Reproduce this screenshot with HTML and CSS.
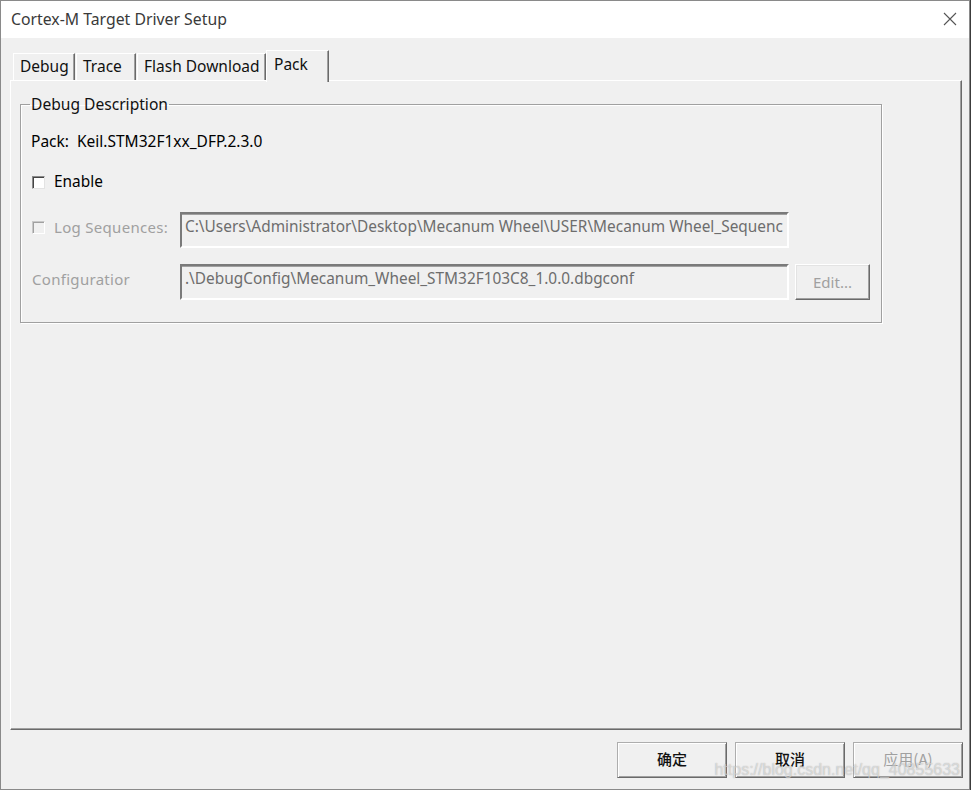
FILE: index.html
```html
<!DOCTYPE html>
<html>
<head>
<meta charset="utf-8">
<link rel="stylesheet" href="styles.css">
</head>
<body>
<div class="window">
  <div class="titlebar">
    <span class="title">Cortex-M Target Driver Setup</span>
    <svg class="close" width="14" height="14" viewBox="0 0 14 14"><path d="M1 1L13 13M13 1L1 13" stroke="#555" stroke-width="1.1" fill="none"/></svg>
  </div>
  <div class="client">
    <div class="tabs">
      <div class="tab tab-debug">Debug</div>
      <div class="tab tab-trace">Trace</div>
      <div class="tab tab-flash">Flash Download</div>
      <div class="tab tab-pack active">Pack</div>
    </div>
    <div class="panel">
      <fieldset class="desc">
        <legend>Debug Description</legend>
        <div class="pack-row">Pack:&nbsp; Keil.STM32F1xx_DFP.2.3.0</div>
        <div class="check-row">
          <span class="checkbox"></span>
          <span class="check-label">Enable</span>
        </div>
        <div class="field-row">
          <div class="field-label">
            <span class="checkbox disabled"></span>
            <span class="check-label dim">Log Sequences:</span>
          </div>
          <div class="input">C:\Users\Administrator\Desktop\Mecanum Wheel\USER\Mecanum Wheel_Sequenc</div>
        </div>
        <div class="field-row">
          <div class="field-label"><span class="dim">Configuratior</span></div>
          <div class="input">.\DebugConfig\Mecanum_Wheel_STM32F103C8_1.0.0.dbgconf</div>
          <div class="btn edit">Edit...</div>
        </div>
      </fieldset>
    </div>
    <div class="buttons">
      <div class="btn dlg">确定</div>
      <div class="btn dlg">取消</div>
      <div class="btn dlg dim-btn">应用(A)</div>
      <div class="watermark">https://blog.csdn.net/qq_40855633</div>
    </div>
  </div>
</div>
</body>
</html>
```
FILE: styles.css
```css
html, body {
  margin: 0;
  padding: 0;
  background: #3c3c3c;
}
body {
  font-family: "Noto Sans", "Noto Sans CJK SC", sans-serif;
  font-size: 15.4px;
  color: #000;
}
.window {
  width: 970px;
  height: 790px;
  box-sizing: border-box;
  border: 1px solid #8a8a8a;
  background: #f0f0f0;
  display: flex;
  flex-direction: column;
}
.titlebar {
  height: 37px;
  flex: none;
  background: #fff;
  display: flex;
  align-items: center;
  justify-content: space-between;
  padding: 0 12px 0 10px;
}
.title {
  font-size: 15.8px;
  color: #3a3a3a;
  margin-top: -1px;
}
.close {
  margin-top: -1px;
}
.client {
  padding: 12px 6px 0 9px;
  position: relative;
}
.tabs {
  display: flex;
  align-items: flex-end;
  height: 32px;
  margin-bottom: -2px;
  padding-left: 3px;
  position: relative;
  z-index: 2;
}
.tab {
  box-sizing: border-box;
  height: 27px;
  margin-bottom: 2px;
  border-top: 1px solid #fff;
  border-left: 1px solid #fff;
  border-right: 1px solid #6a6a6a;
  box-shadow: inset -1px 0 0 #a0a0a0;
  background: #f0f0f0;
  font-size: 15.5px;
  line-height: 25px;
  padding-left: 6px;
  color: #111;
  white-space: nowrap;
}
.tab-debug { width: 62px; }
.tab-trace { width: 60px; margin-left: 1px; }
.tab-flash { width: 129px; margin-left: 1px; }
.tab-pack { width: 63px; }
.tab.active {
  height: 32px;
  margin-bottom: 0;
  line-height: 26px;
  padding-left: 7px;
}
.panel {
  box-sizing: border-box;
  width: 952px;
  height: 650px;
  border-top: 1px solid #fff;
  border-left: 1px solid #fff;
  border-right: 1px solid #6a6a6a;
  border-bottom: 1px solid #6a6a6a;
  box-shadow: inset -1px -1px 0 #a0a0a0;
  padding: 13px 0 0 9px;
}
.desc {
  box-sizing: border-box;
  width: 862px;
  height: 229px;
  margin: 0;
  padding: 17px 0 0 11px;
  border: 1px solid #a0a0a0;
  box-shadow: inset 1px 1px 0 #fff, 1px 1px 0 #fff;
}
.desc legend {
  padding: 0 1px;
  margin-left: -2px;
  font-size: 15.6px;
  line-height: 20px;
  color: #111;
}
.pack-row {
  height: 20px;
  line-height: 20px;
  margin-bottom: 21px;
  margin-left: -1px;
  font-size: 15.5px;
  white-space: nowrap;
}
.check-row {
  height: 20px;
  display: flex;
  align-items: center;
  margin-bottom: 20px;
}
.checkbox {
  box-sizing: border-box;
  width: 13px;
  height: 13px;
  flex: none;
  background: #fff;
  border: 1px solid;
  border-color: #8a8a8a #e3e3e3 #e3e3e3 #8a8a8a;
  box-shadow: inset 1px 1px 0 #444;
  margin-right: 9px;
}
.checkbox.disabled {
  background: #f0f0f0;
  box-shadow: inset 1px 1px 0 #a0a0a0;
  border-color: #c8c8c8 #fff #fff #c8c8c8;
}
.check-label {
  font-size: 15.4px;
  line-height: 20px;
}
.dim {
  color: #a0a0a0;
  font-size: 15px;
  letter-spacing: 0.3px;
  white-space: nowrap;
}
.field-row {
  display: flex;
  align-items: flex-start;
  height: 36px;
  margin-bottom: 16px;
}
.field-label {
  width: 148px;
  flex: none;
  display: flex;
  align-items: center;
  height: 30px;
}
.input {
  box-sizing: border-box;
  width: 609px;
  height: 36px;
  flex: none;
  border: 2px solid;
  border-color: #7a7a7a #fff #fff #7a7a7a;
  box-shadow: inset 0 1px 0 #a0a0a0;
  padding: 3px 0 0 3px;
  line-height: 20px;
  color: #6d6d6d;
  font-size: 15.4px;
  white-space: nowrap;
  overflow: hidden;
}
.btn {
  box-sizing: border-box;
  background: #f0f0f0;
  border-top: 1px solid #fff;
  border-left: 1px solid #fff;
  border-right: 1px solid #6a6a6a;
  border-bottom: 1px solid #6a6a6a;
  box-shadow: inset -1px -1px 0 #a0a0a0, inset 1px 1px 0 #e3e3e3;
  display: flex;
  align-items: center;
  justify-content: center;
}
.edit {
  width: 75px;
  height: 36px;
  margin-left: 6px;
  color: #a0a0a0;
  font-size: 15px;
}
.buttons {
  display: flex;
  justify-content: flex-end;
  gap: 8px;
  margin-top: 12px;
  position: relative;
}
.dlg {
  width: 110px;
  height: 36px;
  padding-bottom: 4px;
  font-family: "Noto Sans CJK SC", sans-serif;
  font-size: 15px;
  font-weight: 500;
  color: #111;
  border: 1px solid #adadad;
  border-right-color: #6a6a6a;
  border-bottom-color: #6a6a6a;
  box-shadow: inset 1px 1px 0 #fff, inset -1px -1px 0 #a0a0a0;
}
.dim-btn {
  color: #a0a0a0;
  font-weight: 400;
}
.watermark {
  position: absolute;
  right: 3px;
  top: 19px;
  font-family: "Liberation Sans", sans-serif;
  font-size: 16px;
  color: rgba(255, 255, 255, 0.5);
  text-shadow: 0 0 1px rgba(90, 90, 90, 0.5);
  pointer-events: none;
}
```
